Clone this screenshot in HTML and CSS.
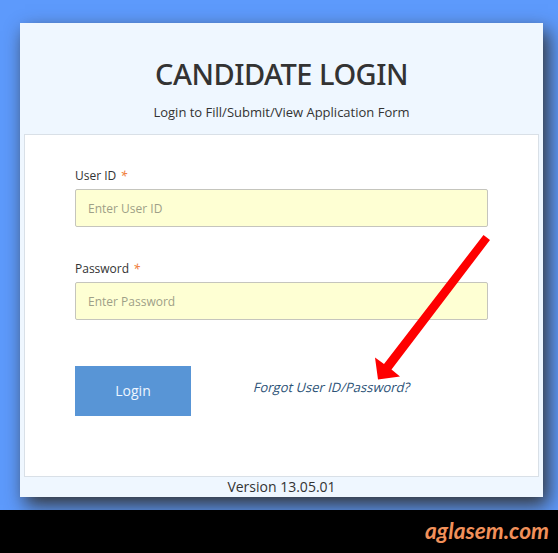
FILE: index.html
```html
<!DOCTYPE html>
<html lang="en">
<head>
<meta charset="utf-8">
<title>Candidate Login</title>
<link rel="stylesheet" href="styles.css">
</head>
<body>
<main class="stage">
  <section class="card">
    <header class="card-header">
      <h1 class="title">CANDIDATE LOGIN</h1>
      <p class="subtitle">Login to Fill/Submit/View Application Form</p>
    </header>
    <form class="panel">
      <div class="field">
        <label class="label" for="user">User ID <span class="required">*</span></label>
        <input class="input" id="user" type="text" placeholder="Enter User ID">
      </div>
      <div class="field">
        <label class="label" for="pass">Password <span class="required">*</span></label>
        <input class="input" id="pass" type="password" placeholder="Enter Password">
      </div>
      <div class="actions">
        <button class="login" type="button">Login</button>
        <a class="forgot" href="#">Forgot User ID/Password?</a>
      </div>
    </form>
    <footer class="version">Version 13.05.01</footer>
  </section>
  <svg class="arrow" width="116" height="148" viewBox="0 0 116 148">
    <path d="M108.500 0 L115 5 L16.500 134.500 L25 141.500 L3 144.500 L0 122.500 L9 129 Z" fill="#fe0000"/>
  </svg>
</main>
<div class="watermark"><svg class="brand" width="133" height="43" viewBox="0 0 133 43"><text class="brand-text" x="0" y="29" textLength="124" lengthAdjust="spacingAndGlyphs">aglasem.com</text></svg></div>
</body>
</html>
```
FILE: styles.css
```css
* { box-sizing: border-box; }

body {
  margin: 0;
  height: 553px;
  overflow: hidden;
  background: #000;
  color: #333;
  font-family: "Open Sans", "Noto Sans", sans-serif;
}

.stage {
  position: relative;
  height: 510px;
  padding: 23px 15px 0 20px;
  overflow: hidden;
  background: #5d9afc;
}

.card {
  height: 474px;
  padding: 0 4px;
  background: #eff7ff;
  box-shadow: 5px 8px 18px #333;
}

.card-header {
  height: 111px;
  padding-top: 31px;
  text-align: center;
}

.title {
  margin: 0;
  font-family: "Noto Sans", sans-serif;
  font-size: 29px;
  font-weight: 500;
  letter-spacing: -0.5px;
  line-height: 40px;
}

.subtitle {
  margin: 9px 0 0;
  font-size: 13px;
  line-height: 18px;
}

.panel {
  height: 343px;
  padding: 32px 50px 0;
  border: 1px solid #d9e0e7;
  background: #fff;
}

.field { height: 93px; }

.label {
  display: block;
  height: 22px;
  font-size: 12px;
  line-height: 17px;
}

.required {
  margin-left: 1px;
  color: #f08040;
  font-family: "Noto Sans", sans-serif;
  font-style: italic;
  font-weight: 500;
}

.input {
  display: block;
  width: 413px;
  height: 38px;
  padding: 0 12px;
  border: 1px solid #c5c5bd;
  border-radius: 2px;
  background: #feffd3;
  font-family: "Open Sans", sans-serif;
  font-size: 12px;
}

.input::placeholder { color: #9e9f88; opacity: 1; }

.actions {
  display: flex;
  align-items: flex-start;
  gap: 63px;
  padding-top: 13px;
}

.login {
  width: 116px;
  height: 50px;
  padding: 0 0 1px;
  border: 0;
  background: #5895d6;
  color: #eef6ff;
  font-family: "Open Sans", sans-serif;
  font-size: 14px;
}

.forgot {
  margin-top: 12px;
  color: #2d5377;
  font-size: 13px;
  line-height: 18px;
  text-decoration: none;
  transform: skewX(-14deg);
}

.version {
  height: 20px;
  font-size: 14px;
  line-height: 20px;
  text-align: center;
}

.arrow {
  position: absolute;
  left: 375px;
  top: 235px;
}

.watermark {
  display: flex;
  justify-content: flex-end;
  height: 43px;
}

.brand { display: block; }

.brand-text {
  fill: #f1905a;
  font-family: "Lato", sans-serif;
  font-size: 23px;
  font-style: italic;
  font-weight: 700;
}
```
